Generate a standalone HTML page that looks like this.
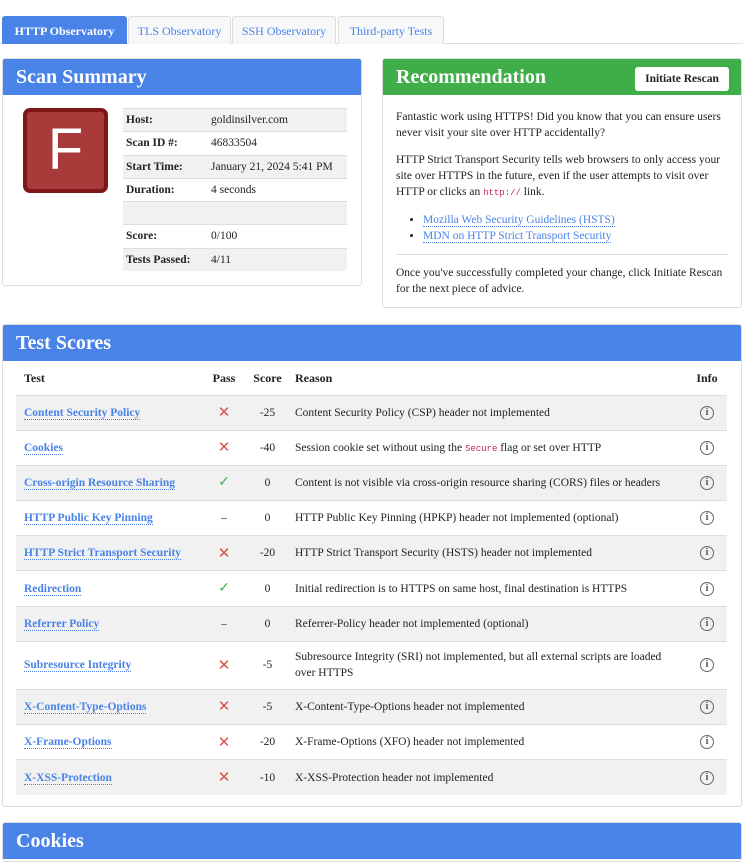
<!DOCTYPE html>
<html><head><meta charset="utf-8"><style>
*{box-sizing:border-box;margin:0;padding:0}
body{width:743px;height:842px;overflow:hidden;background:#fff;font-family:"Liberation Serif",serif;font-size:12px;color:#222;position:relative}
.abs{position:absolute}
.tab{position:absolute;top:16px;height:28px;border:1px solid #ddd;border-bottom:none;background:#f8f8f8;color:#4a83e8;font-size:12px;text-align:center;line-height:28px;border-radius:3px 3px 0 0}
.card{position:absolute;border:1px solid #ddd;border-radius:3px;background:#fff;overflow:hidden}
.hd{height:36px;background:#4a83e8;color:#fff;font-weight:bold;font-size:20px;line-height:36px;padding-left:13px}
.st{position:absolute;left:123px;width:224px}
.st div{height:23.3px;line-height:23px;border-top:1px solid #ddd;padding-left:3px;font-size:11.5px}
.st div:nth-child(odd){background:#f1f1f1}
.st b{display:inline-block;width:85px}
a{color:#4a83e8;text-decoration:none;border-bottom:1px dotted #4a83e8}
table{border-collapse:collapse;position:absolute;left:16px;top:362px;width:711px}
td,th{font-size:11.5px;padding:0 4px}
th{text-align:left;height:33px;font-size:12px}
tbody tr{height:35.2px;border-top:1px solid #ddd}
tbody tr:nth-child(odd){background:#f1f1f1}
td.l a{font-weight:bold}
td.c{text-align:center}
.x{color:#d9534f;font-size:15px}
.ok{color:#3fae49;font-size:14px}
.i{display:inline-block;width:14px;height:14px;border:1.3px solid #666;border-radius:50%;font-size:10px;line-height:11px;text-align:center;color:#555;font-weight:bold}
code{font-family:"Liberation Mono",monospace;font-size:9px;color:#c7254e}
p{margin:0 0 11px}
</style></head><body>
<div class="abs" style="left:0;top:43px;width:743px;height:1px;background:#ddd"></div>
<div class="tab" style="left:2px;width:125px;background:#4a83e8;color:#fff;font-weight:bold;border-color:#4a83e8">HTTP Observatory</div>
<div class="tab" style="left:128px;width:103px">TLS Observatory</div>
<div class="tab" style="left:232px;width:104px">SSH Observatory</div>
<div class="tab" style="left:338px;width:106px">Third-party Tests</div>

<div class="card" style="left:2px;top:58px;width:360px;height:228px">
<div class="hd">Scan Summary</div>
<div class="abs" style="left:20px;top:49px;width:85px;height:85px;background:#a83a3a;border:4px solid #7f1717;border-radius:7px;color:#fff;font-family:'Liberation Sans',sans-serif;font-size:58px;text-align:center;line-height:76px">F</div>
<div class="st" style="left:120px;top:49px">
<div><b>Host:</b>goldinsilver.com</div>
<div><b>Scan ID #:</b>46833504</div>
<div><b>Start Time:</b>January 21, 2024 5:41 PM</div>
<div><b>Duration:</b>4 seconds</div>
<div>&nbsp;</div>
<div><b>Score:</b>0/100</div>
<div><b>Tests Passed:</b>4/11</div>
</div>
</div>

<div class="card" style="left:382px;top:58px;width:360px;height:250px">
<div class="hd" style="background:#3fae49">Recommendation</div>
<div class="abs" style="left:252px;top:8px;width:94px;height:24px;background:#fff;border-radius:3px;font-weight:bold;font-size:11.5px;text-align:center;line-height:24px;color:#222">Initiate Rescan</div>
<div style="padding:14px 13px 0 13px;font-size:11.5px;line-height:16px">
<p>Fantastic work using HTTPS! Did you know that you can ensure users never visit your site over HTTP accidentally?</p>
<p>HTTP Strict Transport Security tells web browsers to only access your site over HTTPS in the future, even if the user attempts to visit over HTTP or clicks an <code>http://</code> link.</p>
<ul style="padding-left:27px;margin-bottom:10px"><li><a>Mozilla Web Security Guidelines (HSTS)</a></li><li><a>MDN on HTTP Strict Transport Security</a></li></ul>
<div style="border-top:1px solid #ddd;margin-bottom:10px"></div>
<p>Once you've successfully completed your change, click Initiate Rescan for the next piece of advice.</p>
</div>
</div>

<div class="card" style="left:2px;top:324px;width:740px;height:483px">
<div class="hd">Test Scores</div>
</div>
<table>
<thead><tr><th style="width:188px;padding-left:8px">Test</th><th style="width:40px;text-align:center">Pass</th><th style="width:47px;text-align:center">Score</th><th>Reason</th><th style="width:40px;text-align:center">Info</th></tr></thead>
<tbody>
<tr><td class="l" style="padding-left:8px"><a>Content Security Policy</a></td><td class="c x">✕</td><td class="c">-25</td><td>Content Security Policy (CSP) header not implemented</td><td class="c"><span class="i">i</span></td></tr>
<tr><td class="l" style="padding-left:8px"><a>Cookies</a></td><td class="c x">✕</td><td class="c">-40</td><td>Session cookie set without using the <code>Secure</code> flag or set over HTTP</td><td class="c"><span class="i">i</span></td></tr>
<tr><td class="l" style="padding-left:8px"><a>Cross-origin Resource Sharing</a></td><td class="c ok">✓</td><td class="c">0</td><td>Content is not visible via cross-origin resource sharing (CORS) files or headers</td><td class="c"><span class="i">i</span></td></tr>
<tr><td class="l" style="padding-left:8px"><a>HTTP Public Key Pinning</a></td><td class="c">–</td><td class="c">0</td><td>HTTP Public Key Pinning (HPKP) header not implemented (optional)</td><td class="c"><span class="i">i</span></td></tr>
<tr><td class="l" style="padding-left:8px"><a>HTTP Strict Transport Security</a></td><td class="c x">✕</td><td class="c">-20</td><td>HTTP Strict Transport Security (HSTS) header not implemented</td><td class="c"><span class="i">i</span></td></tr>
<tr><td class="l" style="padding-left:8px"><a>Redirection</a></td><td class="c ok">✓</td><td class="c">0</td><td>Initial redirection is to HTTPS on same host, final destination is HTTPS</td><td class="c"><span class="i">i</span></td></tr>
<tr><td class="l" style="padding-left:8px"><a>Referrer Policy</a></td><td class="c">–</td><td class="c">0</td><td>Referrer-Policy header not implemented (optional)</td><td class="c"><span class="i">i</span></td></tr>
<tr style="height:48px"><td class="l" style="padding-left:8px"><a>Subresource Integrity</a></td><td class="c x">✕</td><td class="c">-5</td><td style="line-height:16px">Subresource Integrity (SRI) not implemented, but all external scripts are loaded over HTTPS</td><td class="c"><span class="i">i</span></td></tr>
<tr><td class="l" style="padding-left:8px"><a>X-Content-Type-Options</a></td><td class="c x">✕</td><td class="c">-5</td><td>X-Content-Type-Options header not implemented</td><td class="c"><span class="i">i</span></td></tr>
<tr><td class="l" style="padding-left:8px"><a>X-Frame-Options</a></td><td class="c x">✕</td><td class="c">-20</td><td>X-Frame-Options (XFO) header not implemented</td><td class="c"><span class="i">i</span></td></tr>
<tr><td class="l" style="padding-left:8px"><a>X-XSS-Protection</a></td><td class="c x">✕</td><td class="c">-10</td><td>X-XSS-Protection header not implemented</td><td class="c"><span class="i">i</span></td></tr>
</tbody></table>

<div class="card" style="left:2px;top:822px;width:740px;height:40px"><div class="hd">Cookies</div></div>
</body></html>
